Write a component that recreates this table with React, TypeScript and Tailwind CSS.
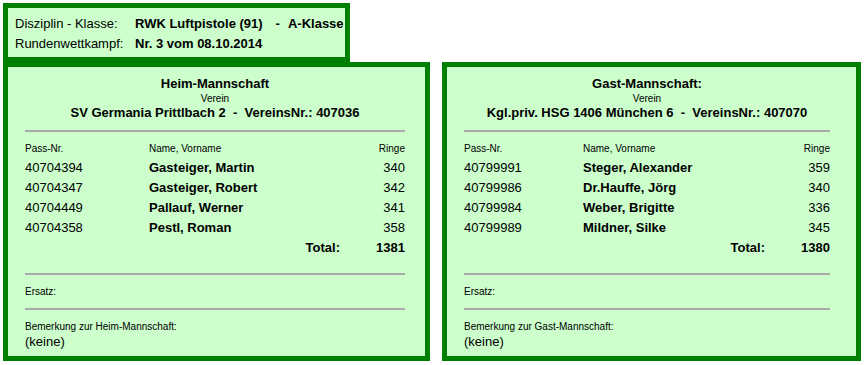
import React from 'react';

interface Shooter {
  pass: string;
  name: string;
  ringe: number;
}

interface Team {
  title: string;
  verein: string;
  vereinsNr: string;
  shooters: Shooter[];
  total: number;
  remarkLabel: string;
  remark: string;
}

const heim: Team = {
  title: 'Heim-Mannschaft',
  verein: 'SV Germania Prittlbach 2',
  vereinsNr: '407036',
  shooters: [
    { pass: '40704394', name: 'Gasteiger, Martin', ringe: 340 },
    { pass: '40704347', name: 'Gasteiger, Robert', ringe: 342 },
    { pass: '40704449', name: 'Pallauf, Werner', ringe: 341 },
    { pass: '40704358', name: 'Pestl, Roman', ringe: 358 },
  ],
  total: 1381,
  remarkLabel: 'Bemerkung zur Heim-Mannschaft:',
  remark: '(keine)',
};

const gast: Team = {
  title: 'Gast-Mannschaft:',
  verein: 'Kgl.priv. HSG 1406 München 6',
  vereinsNr: '407070',
  shooters: [
    { pass: '40799991', name: 'Steger, Alexander', ringe: 359 },
    { pass: '40799986', name: 'Dr.Hauffe, Jörg', ringe: 340 },
    { pass: '40799984', name: 'Weber, Brigitte', ringe: 336 },
    { pass: '40799989', name: 'Mildner, Silke', ringe: 345 },
  ],
  total: 1380,
  remarkLabel: 'Bemerkung zur Gast-Mannschaft:',
  remark: '(keine)',
};

const Rule = () => <div className="h-[2px] bg-[#a9a9a9]" />;

const TeamPanel = ({
  team,
  panelWidth,
  contentWidth,
  passCol,
}: {
  team: Team;
  panelWidth: string;
  contentWidth: string;
  passCol: string;
}) => (
  <div className={`${panelWidth} h-[299px] border-[5px] border-[#008000] bg-[#ccffcc]`}>
    <div className={`ml-[17px] ${contentWidth} pt-[9px]`}>
      {/* Kopf: Mannschaft und Verein */}
      <div className="text-center text-[13px] font-bold leading-[16px]">{team.title}</div>
      <div className="text-center text-[10px] leading-[13px]">Verein</div>
      <div className="text-center text-[13px] font-bold leading-[16px] whitespace-pre">
        {team.verein}  -  VereinsNr.: {team.vereinsNr}
      </div>

      <div className="mt-[9px]">
        <Rule />
      </div>

      {/* Schützenliste */}
      <div className={`mt-[11px] grid ${passCol}`}>
        <div className="text-[10px] leading-[12px]">Pass-Nr.</div>
        <div className="text-[10px] leading-[12px]">Name, Vorname</div>
        <div className="text-[10px] leading-[12px] text-right">Ringe</div>
      </div>
      <div className={`mt-[3px] grid ${passCol} text-[13px] leading-[20px]`}>
        {team.shooters.map((s) => (
          <React.Fragment key={s.pass}>
            <div>{s.pass}</div>
            <div className="font-bold">{s.name}</div>
            <div className="text-right">{s.ringe}</div>
          </React.Fragment>
        ))}
      </div>
      <div className="flex justify-end text-[13px] font-bold leading-[20px]">
        <span>Total:</span>
        <span className="w-[65px] text-right">{team.total}</span>
      </div>

      <div className="mt-[15px]">
        <Rule />
      </div>
      <div className="mt-[11px] text-[10px] leading-[12px]">Ersatz:</div>
      <div className="mt-[10px]">
        <Rule />
      </div>
      <div className="mt-[11px] text-[10px] leading-[12px]">{team.remarkLabel}</div>
      <div className="text-[13px] leading-[17px]">{team.remark}</div>
    </div>
  </div>
);

export default function App() {
  return (
    <div className="p-[3px] font-['Liberation_Sans',Arial,sans-serif] text-black bg-white min-h-[365px]">
      {/* Wettkampf-Info */}
      <div className="w-[347px] h-[59px] border-[5px] border-[#008000] bg-[#ccffcc] pl-[7px] pt-[6px]">
        <div className="grid grid-cols-[120px_auto] text-[13px] leading-[20px]">
          <div>Disziplin - Klasse:</div>
          <div className="font-bold">
            <span>RWK Luftpistole (91)</span>
            <span className="ml-[13px] mr-[8px]">-</span>
            <span>A-Klasse</span>
          </div>
          <div>Rundenwettkampf:</div>
          <div className="font-bold">Nr. 3 vom 08.10.2014</div>
        </div>
      </div>

      <div className="flex gap-[12px]">
        <TeamPanel
          team={heim}
          panelWidth="w-[427px]"
          contentWidth="w-[380px]"
          passCol="grid-cols-[124px_1fr_auto]"
        />
        <TeamPanel
          team={gast}
          panelWidth="w-[419px]"
          contentWidth="w-[366px]"
          passCol="grid-cols-[119px_1fr_auto]"
        />
      </div>
    </div>
  );
}
